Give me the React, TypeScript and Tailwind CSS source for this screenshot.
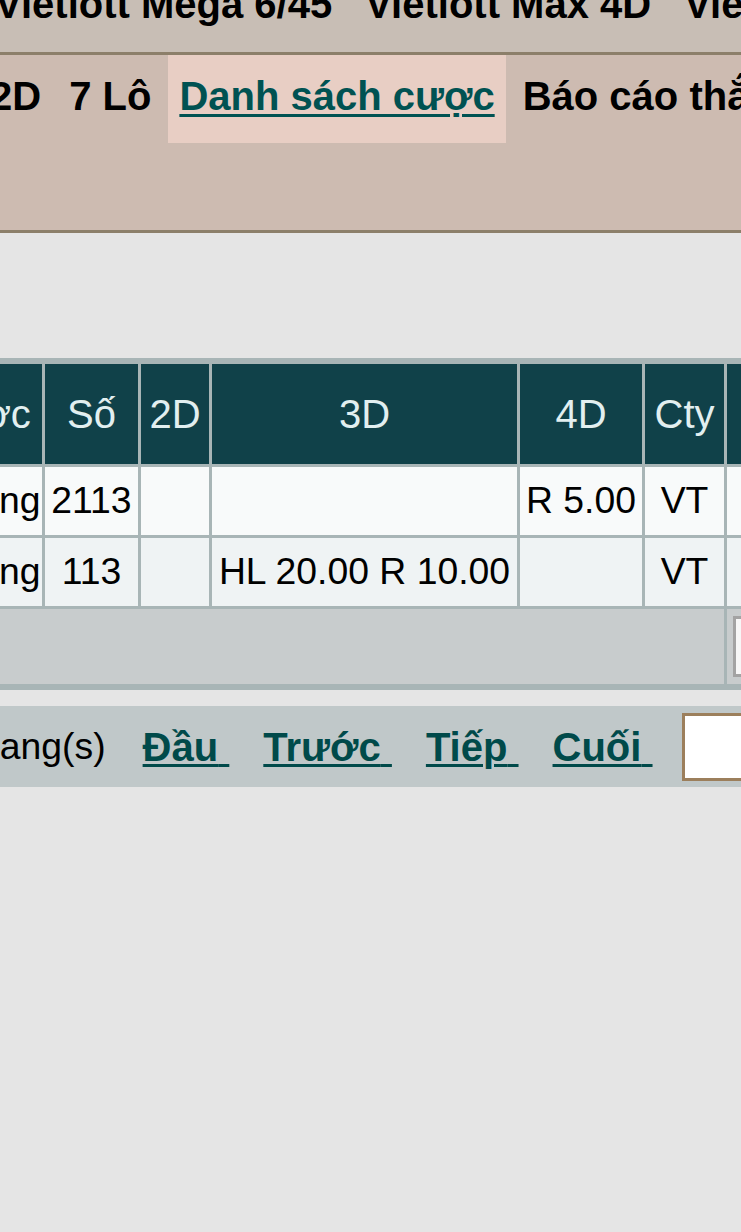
import React from 'react';

const topMenu = ['Vietlott Mega 6/45', 'Vietlott Max 4D', 'Vietlott Max 3D'];
const subMenu = ['2D', '7 Lô', 'Danh sách cược', 'Báo cáo thắng thua'];

interface Bet {
  kind: string;
  so: string;
  d2: string;
  d3: string;
  d4: string;
  cty: string;
}

const bets: Bet[] = [
  { kind: 'Bao thường', so: '2113', d2: '', d3: '', d4: 'R 5.00', cty: 'VT' },
  { kind: 'Bao thường', so: '113', d2: '', d3: 'HL 20.00 R 10.00', d4: '', cty: 'VT' },
];

const pages = ['Đầu', 'Trước', 'Tiếp', 'Cuối'];

export default function App() {
  return (
    <div className="min-h-[1232px] w-[741px] overflow-hidden bg-[#e5e5e5] font-['Liberation_Sans',Arial,sans-serif]">
      {/* top menu, scrolled past */}
      <div className="h-[52px] overflow-hidden bg-[#c8beb5]">
        <div className="-mt-[37px] -ml-[5px] flex gap-[33px] whitespace-nowrap">
          {topMenu.map((m) => (
            <span key={m} className="pt-[19px] pb-[24px] text-[40px] font-bold leading-[45px] text-black">
              {m}
            </span>
          ))}
        </div>
      </div>
      <div className="h-[3px] bg-[#8c7f6a]" />

      {/* sub menu */}
      <div className="h-[175px] overflow-hidden bg-[#cdbbb1]">
        <div className="-ml-[21px] flex gap-[6px] whitespace-nowrap">
          {subMenu.map((m) => {
            const active = m === 'Danh sách cược';
            return (
              <span
                key={m}
                className={`px-[11px] pt-[19px] pb-[24px] text-[40px] font-bold leading-[45px] ${
                  active ? 'bg-[#e8cec4] text-[#005252] underline decoration-[3px] underline-offset-[4px]' : 'text-black'
                }`}
              >
                {m}
              </span>
            );
          })}
        </div>
      </div>
      <div className="h-[3px] bg-[#8c7f6a]" />

      {/* bets table */}
      <div className="mt-[125px] overflow-hidden">
        <div className="-ml-[160px] w-max bg-[#a8b5b6] py-[6px]">
          <div className="grid grid-cols-[202px_93px_68px_305px_122px_79px_200px] gap-[3px]">
            {['Loại cược', 'Số', '2D', '3D', '4D', 'Cty', 'Xóa'].map((h) => (
              <div
                key={h}
                className="flex h-[100px] items-center justify-center bg-[#104149] text-[40px] text-[#e2eff0]"
              >
                {h}
              </div>
            ))}
            {bets.map((b, i) => {
              const bg = i % 2 === 0 ? 'bg-[#f8fafa]' : 'bg-[#eff3f4]';
              return [b.kind, b.so, b.d2, b.d3, b.d4, b.cty, ''].map((c, j) => (
                <div
                  key={`${i}-${j}`}
                  className={`flex h-[68px] items-center justify-center whitespace-nowrap text-[37.33px] text-black ${bg}`}
                >
                  {c}
                </div>
              ));
            })}
            <div className="col-span-6 h-[75px] bg-[#c8cccd]" />
            <div className="flex h-[75px] items-center bg-[#c8cccd] pl-[6px]">
              <div className="h-[61px] w-[120px] border-[3px] border-[#a3a3a3] bg-[#f7f7f7]" />
            </div>
          </div>
        </div>
      </div>

      {/* pager */}
      <div className="mt-[16px] flex h-[81px] items-center whitespace-nowrap bg-[#c0c8c9]">
        <span className="-ml-[23px] mr-[37px] text-[37.33px] text-black">trang(s)</span>
        <div className="flex gap-[34px]">
          {pages.map((p) => (
            <a
              key={p}
              href="#"
              className="text-[40px] font-bold text-[#004a4a] underline decoration-[3px] underline-offset-[3px]"
            >
              {p}&nbsp;
            </a>
          ))}
        </div>
        <div className="ml-[29px] h-[68px] w-[120px] shrink-0 border-[3px] border-[#9c7f5c] bg-white" />
      </div>
    </div>
  );
}
